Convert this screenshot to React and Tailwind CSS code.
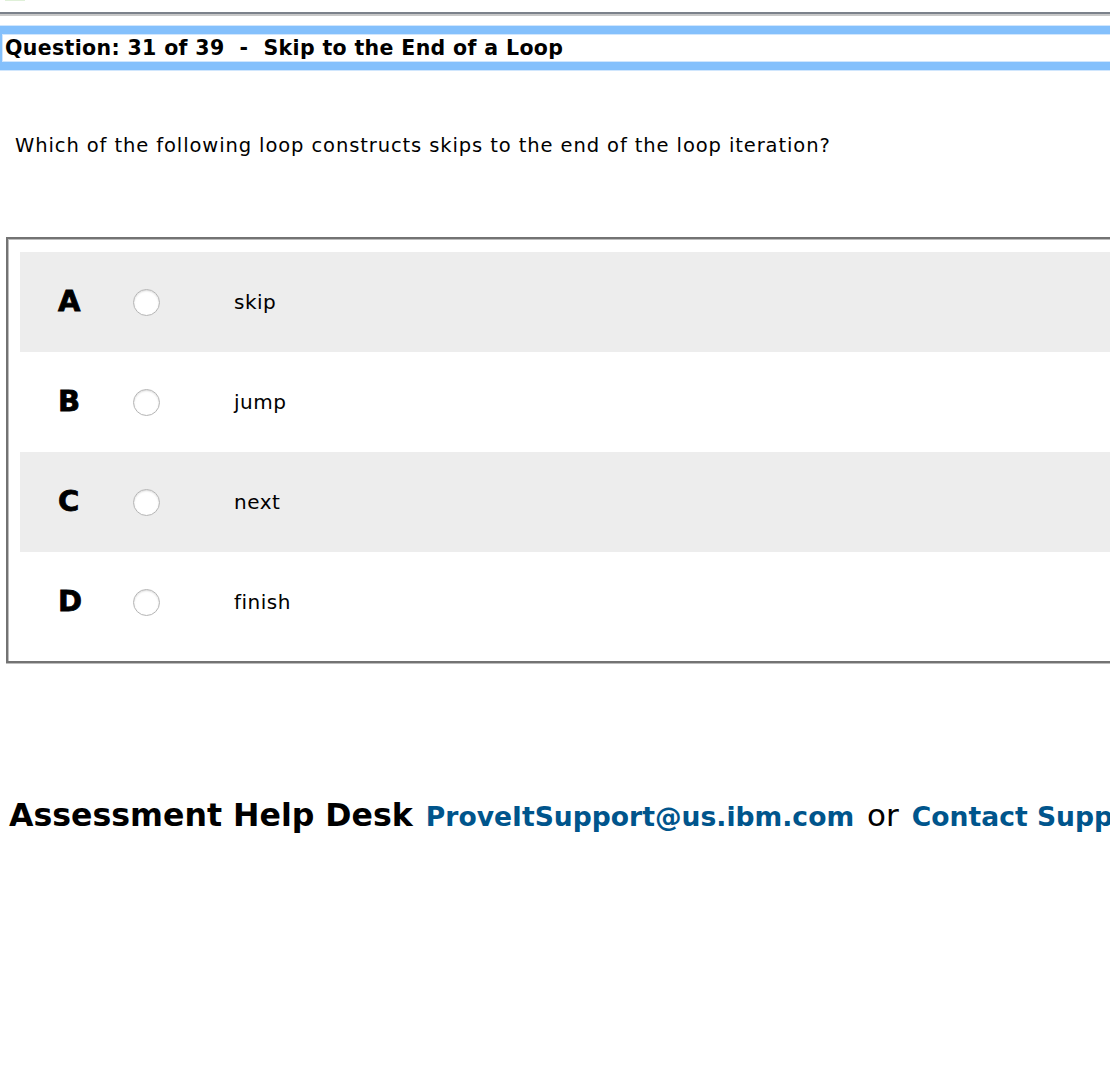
const answers = [
    { letter: 'A', text: 'skip' },
    { letter: 'B', text: 'jump' },
    { letter: 'C', text: 'next' },
    { letter: 'D', text: 'finish' },
];

const App = () => {
    return (
        <div className="w-[1110px] h-[1090px] overflow-hidden bg-white text-black font-['DejaVu_Sans',sans-serif]">
            <div className="w-[1400px]">
                {/* top toolbar remnant */}
                <div className="h-[12px] relative">
                    <div className="absolute left-[5px] top-0 w-[20px] h-[1px] bg-[#dff0d8]" />
                </div>
                <div className="h-[2px] bg-[#7b818a]" />
                <div className="h-[2px] bg-[#c8c8c8]" />

                {/* question header */}
                <div className="mt-[10px] h-[44px] border-y-[8px] border-l-[2px] border-[#84c0fc] shadow-[0_0_0_1px_#d0e6fd,inset_0_0_0_1px_#d0e6fd] flex items-center pl-[3px]">
                    <h2 className="text-[20.5px] tracking-[0.35px] font-bold whitespace-pre leading-none">Question: 31 of 39  -  Skip to the End of a Loop</h2>
                </div>

                <p className="mt-[65px] ml-[15px] text-[19.5px] tracking-[0.9px] leading-[22px]">
                    Which of the following loop constructs skips to the end of the loop iteration?
                </p>

                {/* answers */}
                <div className="mt-[80px] ml-[6px] border-[2px] border-[#737373] shadow-[inset_1px_1px_0_#bdbdbd,0_1px_0_#bdbdbd] pt-[13px] pl-[12px] pb-[9px]">
                    {answers.map((a, i) => (
                        <div key={a.letter} className={`h-[100px] flex items-center ${i % 2 === 0 ? 'bg-[#ededed]' : 'bg-white'}`}>
                            <span className="w-[113px] pl-[38px] text-[29px] font-bold [-webkit-text-stroke:0.8px_black]">{a.letter}</span>
                            <span className="w-[27px] h-[27px] rounded-full border border-[#b5b5b5] bg-white shadow-[inset_0_1px_2px_rgba(0,0,0,0.15)]" />
                            <span className="ml-[74px] text-[20px] tracking-[0.5px]">{a.text}</span>
                        </div>
                    ))}
                </div>

                {/* help desk */}
                <div className="mt-[129px] ml-[9px] whitespace-nowrap flex items-baseline">
                    <span className="text-[31.6px] font-bold">Assessment Help Desk</span>
                    <span className="ml-[13px] text-[26.6px] font-bold text-[#00558c]">ProveItSupport@us.ibm.com</span>
                    <span className="ml-[13px] text-[31px] font-normal">or</span>
                    <span className="ml-[13px] text-[26.6px] font-bold text-[#00558c]">Contact Support</span>
                </div>
            </div>
        </div>
    );
};

export default App;
